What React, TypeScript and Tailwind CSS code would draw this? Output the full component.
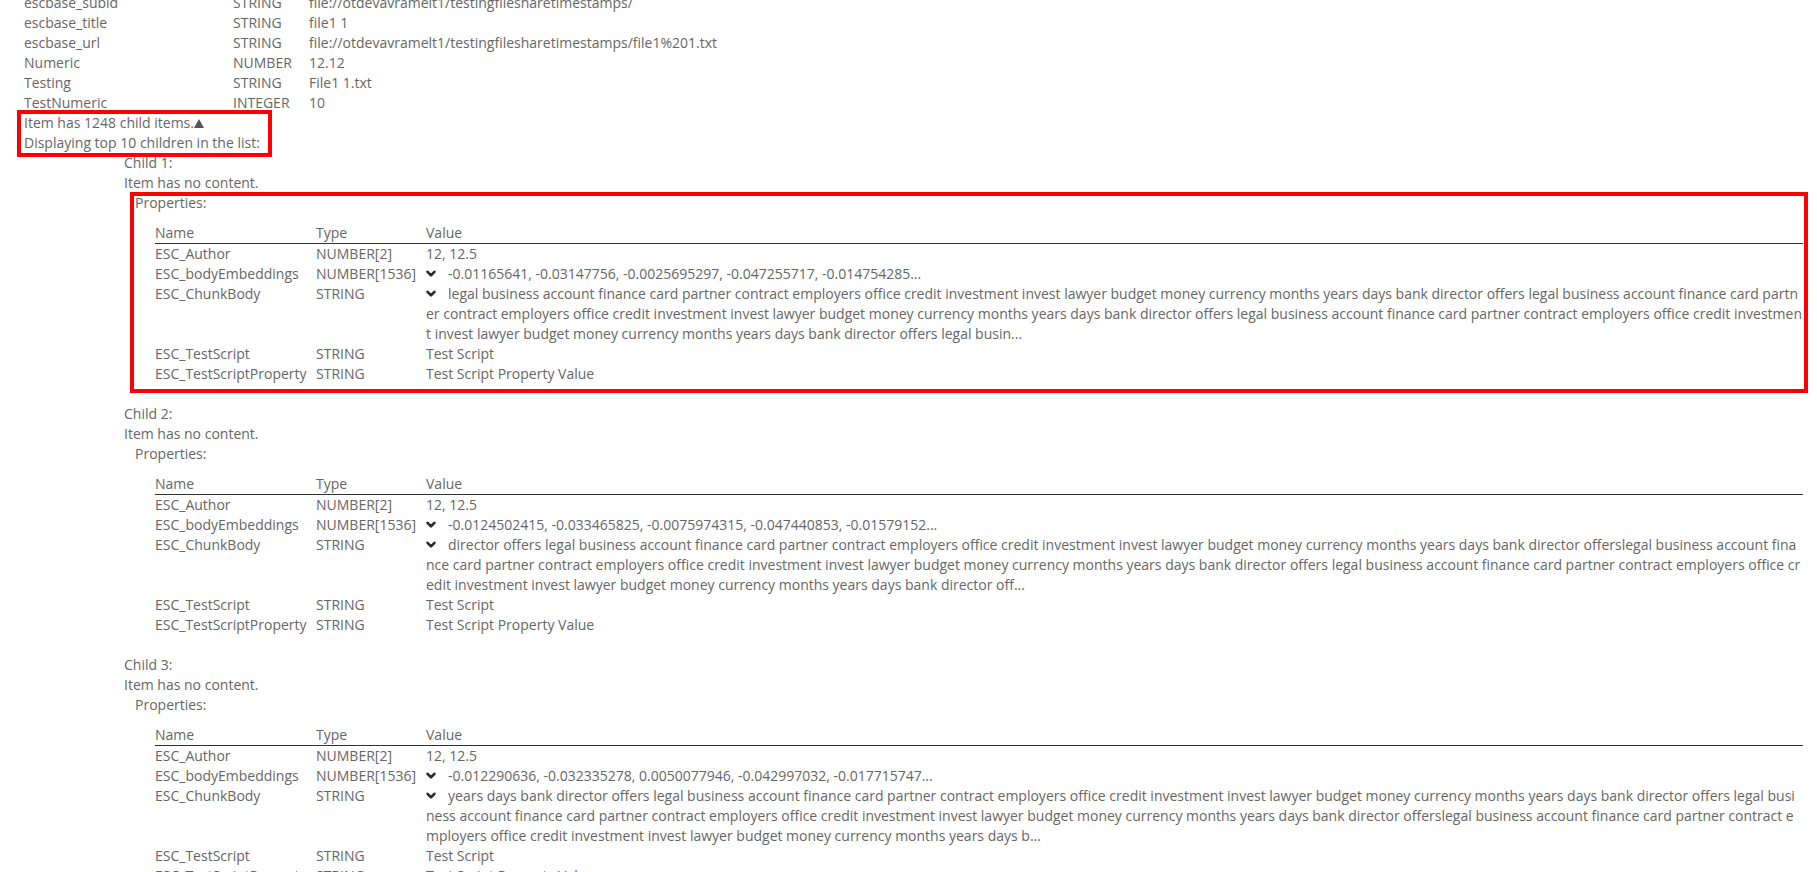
import React from "react";

const topProps: [string, string, string][] = [
  ["escbase_subid", "STRING", "file://otdevavramelt1/testingfilesharetimestamps/"],
  ["escbase_title", "STRING", "file1 1"],
  ["escbase_url", "STRING", "file://otdevavramelt1/testingfilesharetimestamps/file1%201.txt"],
  ["Numeric", "NUMBER", "12.12"],
  ["Testing", "STRING", "File1 1.txt"],
  ["TestNumeric", "INTEGER", "10"],
];

const childItems = [
  {
    embeddings: "-0.01165641, -0.03147756, -0.0025695297, -0.047255717, -0.014754285...",
    chunk:
      "legal business account finance card partner contract employers office credit investment invest lawyer budget money currency months years days bank director offers legal business account finance card partner contract employers office credit investment invest lawyer budget money currency months years days bank director offers legal business account finance card partner contract employers office credit investment invest lawyer budget money currency months years days bank director offers legal busin...",
  },
  {
    embeddings: "-0.0124502415, -0.033465825, -0.0075974315, -0.047440853, -0.01579152...",
    chunk:
      "director offers legal business account finance card partner contract employers office credit investment invest lawyer budget money currency months years days bank director offerslegal business account finance card partner contract employers office credit investment invest lawyer budget money currency months years days bank director offers legal business account finance card partner contract employers office credit investment invest lawyer budget money currency months years days bank director off...",
  },
  {
    embeddings: "-0.012290636, -0.032335278, 0.0050077946, -0.042997032, -0.017715747...",
    chunk:
      "years days bank director offers legal business account finance card partner contract employers office credit investment invest lawyer budget money currency months years days bank director offers legal business account finance card partner contract employers office credit investment invest lawyer budget money currency months years days bank director offerslegal business account finance card partner contract employers office credit investment invest lawyer budget money currency months years days b...",
  },
];

// heavy chevron-down toggle
const Chevron = () => (
  <svg
    viewBox="0 0 10 8"
    className="inline-block w-[10px] h-[8px] mr-[12px] align-[1px]"
    fill="none"
    stroke="#2b2b2b"
    strokeWidth={2.6}
    strokeLinecap="round"
    strokeLinejoin="round"
  >
    <path d="M1.6 1.8 L5 5.4 L8.4 1.8" />
  </svg>
);

const Row = ({ name, type, children }: { name: string; type: string; children: React.ReactNode }) => (
  <div className="grid grid-cols-[161px_110px_1fr]">
    <div>{name}</div>
    <div>{type}</div>
    <div className="break-all">{children}</div>
  </div>
);

const ChildBlock = ({
  index,
  embeddings,
  chunk,
  marked,
}: {
  index: number;
  embeddings: string;
  chunk: string;
  marked?: boolean;
}) => (
  <div className="mb-5">
    <div>Child {index}:</div>
    <div>Item has no content.</div>
    <div className="relative ml-[9px] pl-[2px]">
      {/* annotation box */}
      {marked && (
        <div className="absolute -left-[3px] -top-[1px] -right-[5px] -bottom-[9px] border-4 border-[#ff0000] pointer-events-none" />
      )}
      <div>Properties:</div>
      <div className="ml-5 mt-[10px]">
        <div className="grid grid-cols-[161px_110px_1fr] border-b border-[#333]">
          <div>Name</div>
          <div>Type</div>
          <div>Value</div>
        </div>
        <Row name="ESC_Author" type="NUMBER[2]">12, 12.5</Row>
        <Row name="ESC_bodyEmbeddings" type="NUMBER[1536]">
          <Chevron />
          {embeddings}
        </Row>
        <Row name="ESC_ChunkBody" type="STRING">
          <Chevron />
          {chunk}
        </Row>
        <Row name="ESC_TestScript" type="STRING">Test Script</Row>
        <Row name="ESC_TestScriptProperty" type="STRING">Test Script Property Value</Row>
      </div>
    </div>
  </div>
);

export default function App() {
  return (
    <div className="min-h-screen bg-white overflow-hidden">
      <div className="-mt-[7px] pl-6 pr-[14px] text-[14px] leading-5 text-[#666] font-['Open_Sans',sans-serif]">
        {/* item properties */}
        {topProps.map(([n, t, v]) => (
          <div key={n} className="grid grid-cols-[209px_76px_1fr]">
            <div>{n}</div>
            <div>{t}</div>
            <div>{v}</div>
          </div>
        ))}

        {/* child summary */}
        <div className="relative">
          <div className="absolute -left-[7px] -top-[3px] -bottom-[4px] w-[255px] border-4 border-[#ff0000] pointer-events-none" />
          <div>
            Item has 1248 child items.
            <svg viewBox="0 0 10 9" className="inline-block w-[10px] h-[9px] align-[0px] fill-[#555]">
              <path d="M5 0 L10 9 L0 9 Z" />
            </svg>
          </div>
          <div>Displaying top 10 children in the list:</div>
        </div>

        <div className="ml-[100px]">
          {childItems.map((c, i) => (
            <ChildBlock key={i} index={i + 1} embeddings={c.embeddings} chunk={c.chunk} marked={i === 0} />
          ))}
        </div>
      </div>
    </div>
  );
}
